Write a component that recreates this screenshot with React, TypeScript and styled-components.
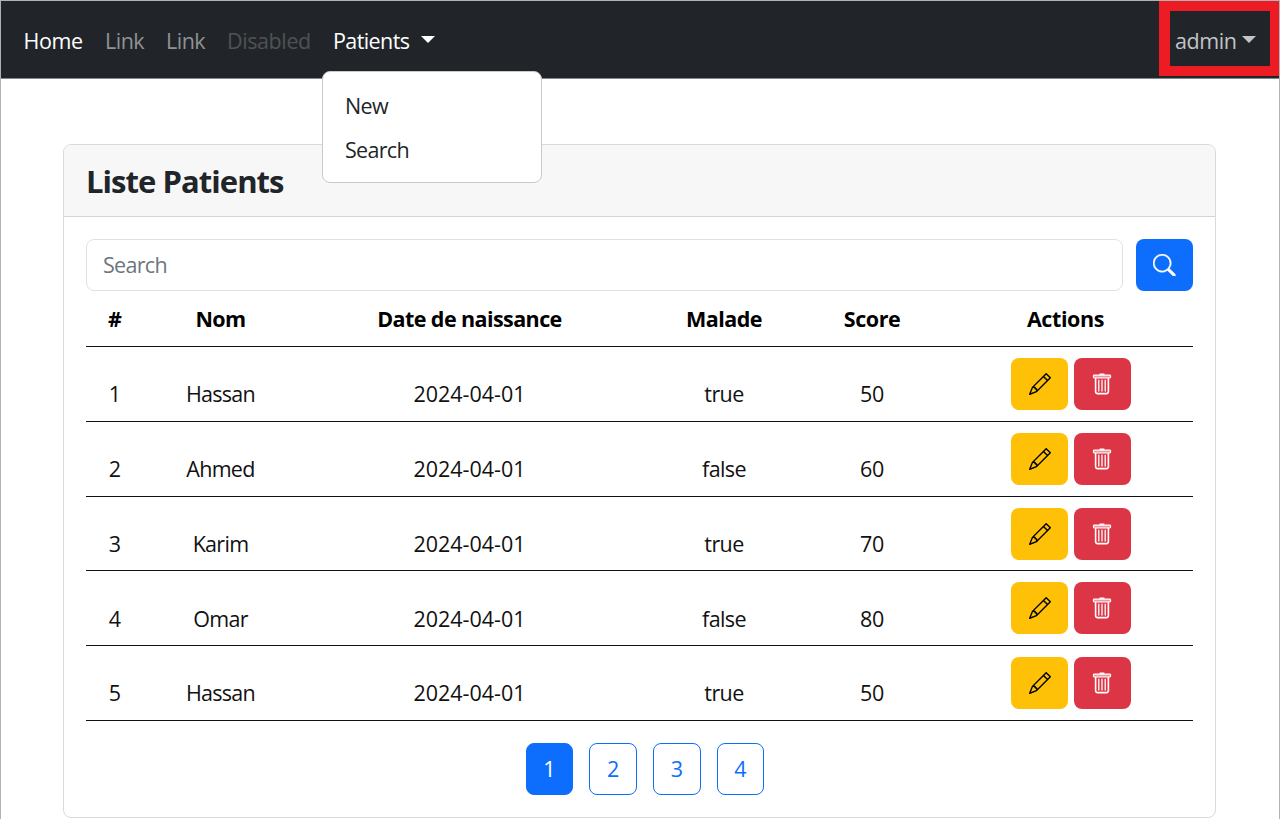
import React from "react";
import styled, { createGlobalStyle } from "styled-components";
import { BsPencil, BsSearch } from "react-icons/bs";

const GlobalStyle = createGlobalStyle`
  *, *::before, *::after { box-sizing: border-box; }
  body {
    margin: 0;
    background: #fff;
    color: #212529;
    font-family: "Open Sans", "Noto Sans", sans-serif;
    font-size: 21.5px;
    line-height: 33px;
    overflow: hidden;
  }
  button, input { font: inherit; letter-spacing: inherit; }
`;

const Page = styled.div`
  height: 819px;
  overflow: hidden;
  border: 1px solid #b1b3b3;
  border-bottom: 0;
`;

const Navbar = styled.nav`
  display: flex;
  justify-content: space-between;
  height: 78px;
  background: #212529;
  border-bottom: 1px solid #85888a;
`;

const NavList = styled.div`
  display: flex;
  align-items: flex-start;
  gap: 22px;
  padding: 23px 0 0 22.5px;
`;

const NavLink = styled.a<{ $color: string; $width: number; $spacing?: number }>`
  flex: none;
  width: ${(p) => p.$width}px;
  color: ${(p) => p.$color};
  letter-spacing: ${(p) => p.$spacing ?? 0}px;
  white-space: nowrap;
`;

const Dropdown = styled.div`
  position: relative;
`;

const Toggle = styled.a<{ $color: string; $gap: number; $spacing?: number }>`
  display: flex;
  align-items: center;
  gap: ${(p) => p.$gap}px;
  color: ${(p) => p.$color};
  letter-spacing: ${(p) => p.$spacing ?? 0}px;
  white-space: nowrap;

  &::after {
    content: "";
    margin-bottom: 2px;
    border: 7px solid transparent;
    border-top-color: currentColor;
    border-bottom: 0;
  }
`;

const Menu = styled.div`
  position: absolute;
  top: 47px;
  left: -11px;
  z-index: 2;
  width: 220px;
  height: 112px;
  padding: 12px 0 0 22px;
  background: #fff;
  border: 1px solid #c9cacb;
  border-radius: 8px;
`;

const MenuItem = styled.a<{ $spacing: number }>`
  display: block;
  height: 44px;
  padding-top: 5px;
  letter-spacing: ${(p) => p.$spacing}px;
`;

const UserBox = styled.div`
  width: 120px;
  height: 75px;
  padding: 13px 0 0 5px;
  border: 10px solid #ed1c24;
  border-left-width: 11px;
  border-right-width: 9px;
`;

const Card = styled.section`
  margin: 65px 63px 0 62px;
  height: 674px;
  border: 1px solid #d9dadb;
  border-radius: 8px;
  overflow: hidden;
`;

const CardHeader = styled.header`
  height: 72px;
  padding: 14px 22px 0;
  background: #f7f7f7;
  border-bottom: 1px solid #d3d4d5;
`;

const Title = styled.h1`
  margin: 0;
  font-size: 31px;
  line-height: 44px;
  font-weight: 700;
  letter-spacing: -0.95px;
`;

const CardBody = styled.div`
  padding: 22px 22px 0;
`;

const SearchForm = styled.form`
  display: flex;
  gap: 13px;
`;

const SearchInput = styled.input`
  flex: 1;
  min-width: 0;
  height: 52px;
  padding: 0 16px 1px;
  border: 1px solid #dee2e6;
  border-radius: 8px;
  outline: 0;
  letter-spacing: -0.7px;

  &::placeholder { color: #6c757d; opacity: 1; }
`;

const IconButton = styled.button<{ $bg: string; $color: string }>`
  display: flex;
  align-items: center;
  justify-content: center;
  flex: none;
  width: 57px;
  height: 52px;
  padding: 0;
  border: 0;
  border-radius: 8px;
  background: ${(p) => p.$bg};
  color: ${(p) => p.$color};
`;

const Row = styled.div<{ $head?: boolean }>`
  display: grid;
  grid-template-columns: 58px 153px 345px 164px 132px 1fr;
  height: ${(p) => (p.$head ? 56 : 74.8)}px;
  border-bottom: 1px solid #111;
  color: ${(p) => (p.$head ? "#000" : "#111")};
  font-weight: ${(p) => (p.$head ? 700 : 400)};
`;

const Cell = styled.div<{ $spacing?: number }>`
  align-self: end;
  padding-bottom: 10.6px;
  text-align: center;
  white-space: nowrap;
  letter-spacing: ${(p) => p.$spacing ?? 0}px;
`;

const Actions = styled.div`
  display: flex;
  justify-content: center;
  gap: 5.5px;
  padding: 11px 0 0 11px;
`;

const Pagination = styled.div`
  display: flex;
  gap: 16px;
  padding: 22px 0 0 439.6px;
`;

const PageLink = styled.button<{ $active?: boolean }>`
  width: 47.7px;
  height: 52px;
  padding: 0;
  border: 1px solid #0d6efd;
  border-radius: 8px;
  background: ${(p) => (p.$active ? "#0d6efd" : "#fff")};
  color: ${(p) => (p.$active ? "#fff" : "#0d6efd")};
`;

const TrashIcon = () => (
  <svg width="22" height="22" viewBox="0 0 22 22" fill="none" stroke="currentColor">
    <path d="M8.6 1.2h4.8" strokeWidth="1.4" />
    <rect x="2.4" y="2.1" width="17.2" height="2.9" rx="0.9" fill="currentColor" fillOpacity="0.5" strokeWidth="1.1" />
    <path d="M4.6 5v13.6a2 2 0 0 0 2 2h8.8a2 2 0 0 0 2-2V5" strokeWidth="1.6" />
    <path d="M7.8 7.2v10.8M11 7.2v10.8M14.2 7.2v10.8" strokeWidth="1.3" strokeLinecap="round" />
  </svg>
);

const columns = [
  { label: "#", spacing: 0 },
  { label: "Nom", spacing: -0.6 },
  { label: "Date de naissance", spacing: -0.58 },
  { label: "Malade", spacing: -0.5 },
  { label: "Score", spacing: -0.45 },
  { label: "Actions", spacing: -0.4 },
];

const patients = [
  { id: 1, name: "Hassan", born: "2024-04-01", sick: true, score: 50 },
  { id: 2, name: "Ahmed", born: "2024-04-01", sick: false, score: 60 },
  { id: 3, name: "Karim", born: "2024-04-01", sick: true, score: 70 },
  { id: 4, name: "Omar", born: "2024-04-01", sick: false, score: 80 },
  { id: 5, name: "Hassan", born: "2024-04-01", sick: true, score: 50 },
];

export default function App() {
  return (
    <Page>
      <GlobalStyle />
      <Navbar>
        <NavList>
          <NavLink $color="#fff" $width={59.5} $spacing={-0.4}>Home</NavLink>
          <NavLink $color="#909294" $width={39} $spacing={-0.5}>Link</NavLink>
          <NavLink $color="#909294" $width={39} $spacing={-0.5}>Link</NavLink>
          <NavLink $color="#4f5255" $width={84} $spacing={-0.4}>Disabled</NavLink>
          <Dropdown>
            <Toggle $color="#fff" $gap={11.5} $spacing={-0.6}>Patients</Toggle>
            <Menu>
              <MenuItem $spacing={-0.6}>New</MenuItem>
              <MenuItem $spacing={-0.7}>Search</MenuItem>
            </Menu>
          </Dropdown>
        </NavList>
        <UserBox>
          <Toggle $color="#c3c4c5" $gap={5} $spacing={-0.4}>admin</Toggle>
        </UserBox>
      </Navbar>
      <Card>
        <CardHeader>
          <Title>Liste Patients</Title>
        </CardHeader>
        <CardBody>
          <SearchForm>
            <SearchInput placeholder="Search" />
            <IconButton type="button" $bg="#0d6efd" $color="#fff" aria-label="Search">
              <BsSearch size={22.5} strokeWidth={0.3} />
            </IconButton>
          </SearchForm>
          <Row $head>
            {columns.map((c) => (
              <Cell key={c.label} $spacing={c.spacing}>{c.label}</Cell>
            ))}
          </Row>
          {patients.map((p) => (
            <Row key={p.id}>
              <Cell>{p.id}</Cell>
              <Cell $spacing={-0.7}>{p.name}</Cell>
              <Cell>{p.born}</Cell>
              <Cell $spacing={-0.6}>{String(p.sick)}</Cell>
              <Cell $spacing={-0.4}>{p.score}</Cell>
              <Actions>
                <IconButton $bg="#ffc107" $color="#000" aria-label="Edit">
                  <BsPencil size={22} />
                </IconButton>
                <IconButton $bg="#dc3545" $color="#fff" aria-label="Delete">
                  <TrashIcon />
                </IconButton>
              </Actions>
            </Row>
          ))}
          <Pagination>
            {[1, 2, 3, 4].map((n) => (
              <PageLink key={n} $active={n === 1}>{n}</PageLink>
            ))}
          </Pagination>
        </CardBody>
      </Card>
    </Page>
  );
}
